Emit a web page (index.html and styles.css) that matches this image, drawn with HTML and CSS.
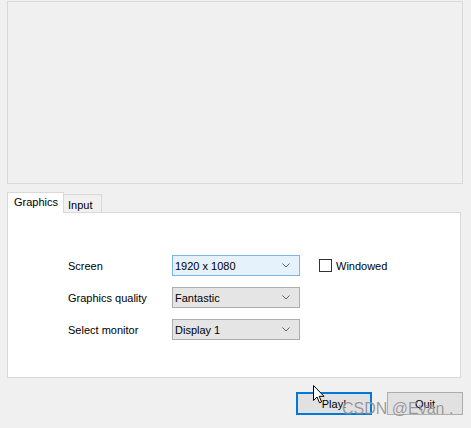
FILE: index.html
```html
<!DOCTYPE html>
<html>
<head>
<meta charset="utf-8">
<link rel="stylesheet" href="styles.css">
</head>
<body>
<div class="app">
  <div class="preview"></div>
  <div class="tabs">
    <div class="tablist">
      <div class="tab active">Graphics</div>
      <div class="tab">Input</div>
    </div>
    <div class="panel">
      <div class="form">
        <div class="label">Screen</div>
        <div class="combo focus"><span>1920 x 1080</span><svg class="chev" width="8" height="5" viewBox="0 0 8 5"><polyline points="0.5,0.5 4,4 7.5,0.5" fill="none" stroke="#606060" stroke-width="1"/></svg></div>
        <label class="check"><span class="box"></span>Windowed</label>
        <div class="label">Graphics quality</div>
        <div class="combo"><span>Fantastic</span><svg class="chev" width="8" height="5" viewBox="0 0 8 5"><polyline points="0.5,0.5 4,4 7.5,0.5" fill="none" stroke="#606060" stroke-width="1"/></svg></div>
        <div></div>
        <div class="label">Select monitor</div>
        <div class="combo"><span>Display 1</span><svg class="chev" width="8" height="5" viewBox="0 0 8 5"><polyline points="0.5,0.5 4,4 7.5,0.5" fill="none" stroke="#606060" stroke-width="1"/></svg></div>
        <div></div>
      </div>
    </div>
  </div>
  <div class="buttons">
    <div class="btn primary">Play!</div>
    <div class="btn">Quit</div>
  </div>
</div>
<svg class="cursor" width="12" height="19" viewBox="0 0 12 19"><path d="M0.5,0.5 L0.5,15.5 L4,12 L6.5,17.8 L8.6,16.9 L6.2,11.3 L11,11.3 Z" fill="#fff" stroke="#000" stroke-width="1" stroke-linejoin="miter"/></svg>
<div class="watermark">CSDN @Evan .</div>
</body>
</html>
```

FILE: styles.css
```css
html, body {
  margin: 0;
  padding: 0;
}
body {
  width: 471px;
  height: 428px;
  background: #f0f0f0;
  font-family: "Liberation Sans", Arial, sans-serif;
  font-size: 11px;
  color: #000;
  position: relative;
  overflow: hidden;
}
.app {
  display: flex;
  flex-direction: column;
  padding: 1px 0 0 7px;
}
.preview {
  width: 456px;
  height: 183px;
  box-sizing: border-box;
  border: 1px solid #d9d9d9;
  background: #f0f0f0;
}
.tabs {
  margin-top: 8px;
  display: flex;
  flex-direction: column;
}
.tablist {
  display: flex;
  align-items: flex-end;
  height: 20px;
  position: relative;
  z-index: 1;
}
.tab {
  box-sizing: border-box;
  height: 18px;
  border: 1px solid #d9d9d9;
  border-left: none;
  border-bottom: none;
  background: #f0f0f0;
  padding: 4px 0 0 4px;
  width: 38px;
  font-size: 11px;
}
.tab.active {
  width: 57px;
  border-left: 1px solid #d9d9d9;
  background: #fff;
  padding: 3px 0 0 6px;
  margin-bottom: -1px;
  height: 21px;
}
.panel {
  width: 454px;
  height: 166px;
  box-sizing: border-box;
  border: 1px solid #d9d9d9;
  background: #fff;
  padding: 42px 0 0 60px;
}
.form {
  display: grid;
  grid-template-columns: 104px 128px auto;
  grid-auto-rows: 21px;
  row-gap: 11px;
  align-items: center;
}
.label {
  font-size: 11px;
}
.combo {
  box-sizing: border-box;
  height: 21px;
  border: 1px solid #adadad;
  background: #e5e5e5;
  display: flex;
  align-items: center;
  justify-content: space-between;
  padding: 0 9px 0 2px;
}
.combo.focus {
  border-color: #7eb4ea;
  background: #e5f1fb;
}
.chev {
  display: block;
}
.check {
  display: flex;
  align-items: center;
  margin-left: 19px;
  gap: 4px;
}
.box {
  width: 13px;
  height: 13px;
  box-sizing: border-box;
  border: 1px solid #333;
  background: #fff;
}
.buttons {
  display: flex;
  justify-content: flex-end;
  gap: 15px;
  width: 456px;
  margin-top: 14px;
}
.btn {
  box-sizing: border-box;
  width: 76px;
  height: 23px;
  border: 1px solid #adadad;
  background: #e1e1e1;
  display: flex;
  align-items: center;
  justify-content: center;
}
.btn.primary {
  border: 2px solid #0078d7;
}
.cursor {
  position: absolute;
  left: 313px;
  top: 385px;
}
.watermark {
  position: absolute;
  left: 342px;
  top: 400px;
  font-family: "Liberation Sans", Arial, sans-serif;
  font-size: 16px;
  color: rgba(120, 120, 120, 0.75);
  text-shadow: 0 0 1px rgba(255, 255, 255, 0.6);
}
```
